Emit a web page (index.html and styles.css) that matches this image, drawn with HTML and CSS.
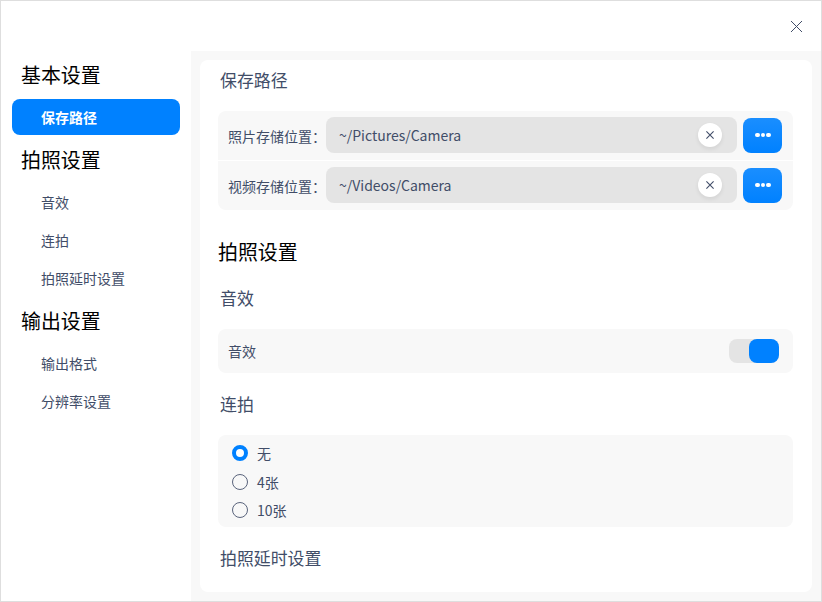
FILE: index.html
```html
<!DOCTYPE html>
<html lang="zh-CN">
<head>
<meta charset="utf-8">
<title>设置</title>
<link rel="stylesheet" href="styles.css">
</head>
<body>
<div class="window">
  <header class="titlebar">
    <svg class="close" width="11" height="11" viewBox="0 0 11 11"><path d="M0 0L11 11M11 0L0 11"/></svg>
  </header>
  <div class="body">
    <nav class="sidebar">
      <h2 class="nav-title">基本设置</h2>
      <a class="nav-item active">保存路径</a>
      <h2 class="nav-title">拍照设置</h2>
      <a class="nav-item">音效</a>
      <a class="nav-item">连拍</a>
      <a class="nav-item">拍照延时设置</a>
      <h2 class="nav-title">输出设置</h2>
      <a class="nav-item">输出格式</a>
      <a class="nav-item">分辨率设置</a>
    </nav>
    <main class="main">
      <div class="panel">
        <h3 class="sub first">保存路径</h3>
        <section class="group paths">
          <div class="path-row">
            <label class="path-label">照片存储位置：</label>
            <div class="field"><span class="value">~/Pictures/Camera</span>
              <span class="clear"><svg width="8" height="8" viewBox="0 0 8 8"><path d="M.4.4L7.6 7.6M7.6.4L.4 7.6"/></svg></span></div>
            <div class="browse"><i></i><i></i><i></i></div>
          </div>
          <div class="path-row">
            <label class="path-label">视频存储位置：</label>
            <div class="field"><span class="value">~/Videos/Camera</span>
              <span class="clear"><svg width="8" height="8" viewBox="0 0 8 8"><path d="M.4.4L7.6 7.6M7.6.4L.4 7.6"/></svg></span></div>
            <div class="browse"><i></i><i></i><i></i></div>
          </div>
        </section>
        <h2 class="section-title">拍照设置</h2>
        <h3 class="sub">音效</h3>
        <section class="group sound">
          <span>音效</span>
          <span class="switch"><span class="knob"></span></span>
        </section>
        <h3 class="sub">连拍</h3>
        <section class="group radios">
          <div class="option"><span class="radio checked"></span>无</div>
          <div class="option"><span class="radio"></span>4张</div>
          <div class="option"><span class="radio"></span>10张</div>
        </section>
        <h3 class="sub">拍照延时设置</h3>
      </div>
    </main>
  </div>
</div>
</body>
</html>
```
FILE: styles.css
```css
* { box-sizing: border-box; }
body {
  margin: 0;
  font: 14px/20px "Noto Sans CJK SC", sans-serif;
  color: #414d68;
}
h2, h3 { margin: 0; font-weight: 400; }
.window {
  width: 822px;
  height: 602px;
  border: 1px solid #dedede;
  background: #fff;
  display: flex;
  flex-direction: column;
  overflow: hidden;
}
.titlebar {
  height: 50px;
  flex: none;
  display: flex;
  justify-content: flex-end;
  padding: 20px 19px 0 0;
}
.close { stroke: #414d68; stroke-width: 1; fill: none; }
.body { flex: 1; display: flex; min-height: 0; }
.sidebar { width: 190px; padding: 0 11px; }
.nav-title {
  height: 48px;
  padding-left: 9px;
  font-size: 19.9px;
  line-height: 48px;
  color: #000;
}
.nav-item + .nav-title { height: 49px; line-height: 50px; }
.nav-title + .nav-item { margin-top: 0; }
.nav-item {
  display: block;
  height: 36px;
  margin-top: 2px;
  padding-left: 29px;
  line-height: 36px;
  border-radius: 8px;
}
.nav-item.active { background: #0081ff; color: #fff; font-weight: 700; }
.main { flex: 1; background: #f8f8f8; padding: 9px; display: flex; }
.panel {
  flex: 1;
  background: #fff;
  border-radius: 8px;
  padding: 0 19px 0 18px;
  overflow: hidden;
}
.sub {
  height: 62px;
  padding: 19px 0 0 2px;
  font-size: 16.9px;
  line-height: 24px;
}
.sub.first { height: 51px; padding-top: 8px; }
.group { border-radius: 8px; background: #f8f8f8; }
.paths {
  display: flex;
  flex-direction: column;
  gap: 1px;
  background: #fff;
  overflow: hidden;
}
.path-row {
  height: 49px;
  padding: 6px 11px 7px 10px;
  display: flex;
  align-items: center;
  background: #f8f8f8;
}
.path-label { width: 98px; padding-top: 1px; white-space: nowrap; }
.field {
  width: 411px;
  height: 36px;
  padding: 0 15px 0 13px;
  border-radius: 8px;
  background: #e4e4e4;
  display: flex;
  align-items: center;
  justify-content: space-between;
}
.clear {
  width: 24px;
  height: 24px;
  border-radius: 50%;
  background: #fff;
  box-shadow: 0 2px 4px rgba(0, 0, 0, .08);
  display: flex;
  align-items: center;
  justify-content: center;
}
.clear svg { stroke: #414d68; stroke-width: 1.1; fill: none; }
.browse {
  width: 39px;
  height: 35px;
  margin: 1px 0 0 6px;
  padding: 0 0 1px 1px;
  border-radius: 8px;
  background: linear-gradient(#1a8eff, #0081ff);
  display: flex;
  align-items: center;
  justify-content: center;
  gap: 1.3px;
}
.browse i { width: 4.4px; height: 4.4px; border-radius: 50%; background: #fff; }
.section-title {
  height: 60px;
  padding-top: 27px;
  font-size: 19.9px;
  line-height: 30px;
  color: #000;
}
.section-title + .sub { height: 59px; padding-top: 16px; }
.sound {
  height: 44px;
  padding: 0 14px 0 10px;
  display: flex;
  align-items: center;
  justify-content: space-between;
}
.switch {
  width: 50px;
  height: 24px;
  border-radius: 8px;
  background: #e4e4e4;
  display: flex;
  justify-content: flex-end;
}
.knob { width: 30px; height: 24px; border-radius: 8px; background: #0081ff; }
.radios {
  height: 92px;
  padding: 4px 14px;
}
.option { height: 28.5px; display: flex; align-items: center; gap: 9px; }
.radio { width: 16px; height: 16px; border-radius: 50%; border: 1px solid #5a647c; }
.radio.checked { border: 4px solid #0081ff; background: #fff; }
```
